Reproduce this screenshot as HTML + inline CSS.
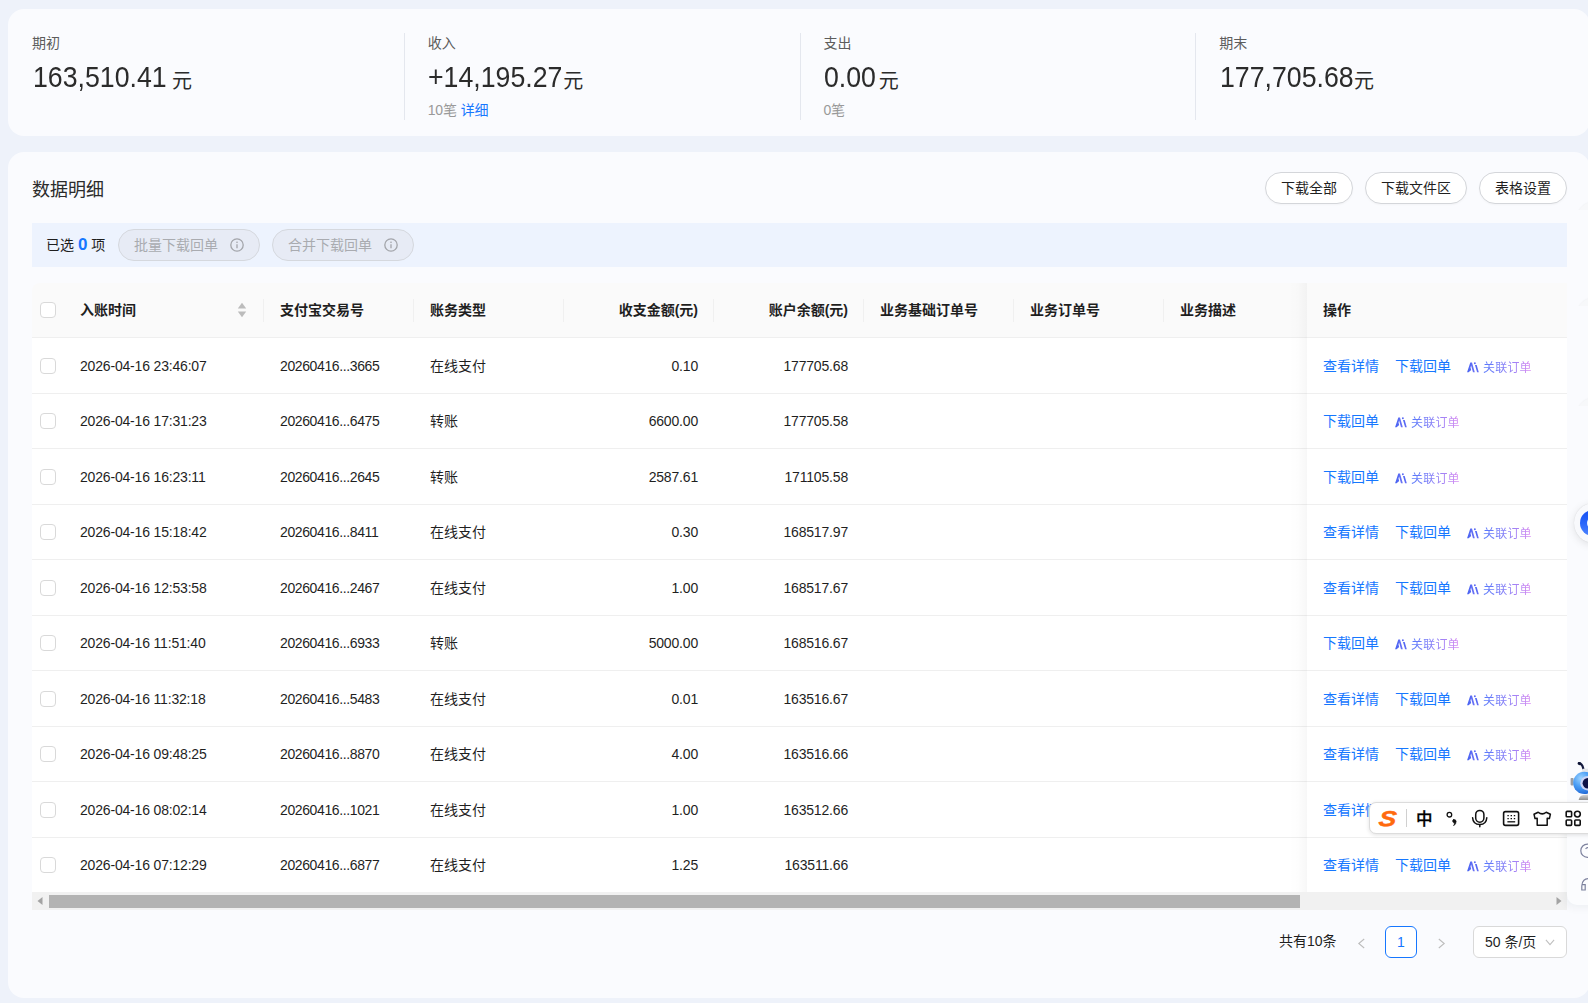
<!DOCTYPE html>
<html lang="zh-CN">
<head>
<meta charset="utf-8">
<title>数据明细</title>
<style>
*{box-sizing:border-box;margin:0;padding:0}
html,body{width:1588px;height:1003px;overflow:hidden}
body{position:relative;background:#eef2fa;font-family:"Liberation Sans","Noto Sans CJK SC",sans-serif;font-size:14px;color:#1f1f1f;-webkit-font-smoothing:antialiased}
.abs{position:absolute}
.card{position:absolute;background:#fafbfe;border-radius:16px}
.stat{position:absolute;top:33px;height:86px}
.stat .lb{position:absolute;left:0;top:1px;font-size:14px;line-height:18px;color:#5c5c5c;white-space:nowrap}
.stat .num{position:absolute;left:0;top:24px;line-height:40px;font-size:30px;color:#2b2b2b;white-space:nowrap;transform:scaleX(0.89);transform-origin:left center}
.stat .yuan{position:absolute;top:24.5px;line-height:40px;font-size:20px;color:#2b2b2b;padding-top:7px;line-height:33px}
.stat .sub{position:absolute;left:0;top:67.5px;font-size:14px;letter-spacing:-0.2px;line-height:18px;color:#999;white-space:nowrap}
.stat .sub a{color:#1677ff;margin-left:4px}
.vline{position:absolute;top:33px;width:1px;height:87px;background:#e4e7ee}
.title{position:absolute;left:32px;top:176.5px;font-size:18px;line-height:26px;color:#2b2b2b}
.pill{position:absolute;top:172px;height:32px;border:1px solid #d4d6da;border-radius:16px;background:#fff;font-size:14px;line-height:30px;text-align:center;color:#1f1f1f;box-shadow:0 1px 2px rgba(0,0,0,.03)}
.selbar{position:absolute;left:32px;top:223px;width:1535px;height:44px;background:#edf3fe}
.selbar .t{position:absolute;left:14px;top:11px;line-height:22px;font-size:14px;color:#1f1f1f;white-space:nowrap}
.selbar .t b{color:#1677ff;font-weight:700;font-size:17px;line-height:20px}
.dis{position:absolute;top:6px;height:32px;width:142px;border:1px solid #d5d8de;border-radius:16px;background:#e7ebf5;color:#a9abb0;font-size:14px;line-height:30px;padding-left:15px;white-space:nowrap}
.dis svg{position:absolute;right:15px;top:8px}
.thead{position:absolute;left:32px;top:283px;width:1535px;height:55px;background:#fafafa;border-bottom:1px solid #efefef;border-radius:8px 0 0 0}
.th{position:absolute;top:0;height:54px;line-height:54px;font-weight:700;font-size:14px;color:#1f1f1f;white-space:nowrap}
.sep{position:absolute;top:16px;width:1px;height:23px;background:#f0f0f0}
.row{position:absolute;left:32px;width:1535px;background:#fff;border-bottom:1px solid #efefef}
.td{position:absolute;top:0;white-space:nowrap;font-size:14px;color:#1f1f1f;letter-spacing:-0.18px}
.td.r{text-align:right}
.cb{position:absolute;left:8px;width:16px;height:16px;border:1px solid #d9d9d9;border-radius:4px;background:#fff}
.ops{position:absolute;left:1291px;top:0;white-space:nowrap;font-size:14px;letter-spacing:0}
.ops a{color:#1677ff;margin-right:16px;text-decoration:none}
.ops .rel{font-size:12px;letter-spacing:0.2px;position:relative;top:1px;background:linear-gradient(90deg,#5678fb 0%,#8a7ef6 50%,#dc8cf2 100%);-webkit-background-clip:text;background-clip:text;color:transparent;-webkit-text-fill-color:transparent}
.ops svg.ai{vertical-align:-2px;margin-right:4px}
.fixshadow{position:absolute;left:1289px;top:283px;width:18px;height:609px;background:linear-gradient(90deg,rgba(0,0,0,0) 0%,rgba(0,0,0,0.008) 50%,rgba(0,0,0,0.03) 100%)}
.sbar{position:absolute;left:32px;top:892px;width:1535px;height:18px;background:#f1f1f1}
.sbar .thumb{position:absolute;left:17px;top:3px;width:1251px;height:13px;background:#b3b3b3}
.pg{position:absolute;font-size:14px;color:#1f1f1f;white-space:nowrap}
</style>
</head>
<body>

<div class="card" style="left:8px;top:9px;width:1582px;height:127px"></div>
<div class="card" style="left:8px;top:152px;width:1582px;height:846px"></div>
<div class="stat" style="left:32px"><div class="lb">期初</div><div class="num" style="left:1px;letter-spacing:0px">163,510.41</div><div class="yuan" style="left:139.9px">元</div></div>
<div class="stat" style="left:427.75px"><div class="lb">收入</div><div class="num" style="left:0px;letter-spacing:0px">+14,195.27</div><div class="yuan" style="left:135.45px">元</div><div class="sub">10笔<a>详细</a></div></div>
<div class="stat" style="left:823.5px"><div class="lb">支出</div><div class="num" style="left:0px;letter-spacing:0px">0.00</div><div class="yuan" style="left:55.2px">元</div><div class="sub">0笔</div></div>
<div class="stat" style="left:1219.25px"><div class="lb">期末</div><div class="num" style="left:1px;letter-spacing:0px">177,705.68</div><div class="yuan" style="left:134.85px">元</div></div>
<div class="vline" style="left:404px"></div>
<div class="vline" style="left:800px"></div>
<div class="vline" style="left:1195.4px"></div>
<div class="title">数据明细</div>
<div class="pill" style="left:1265px;width:88px">下载全部</div>
<div class="pill" style="left:1365px;width:102px">下载文件区</div>
<div class="pill" style="left:1479px;width:88px">表格设置</div>
<div class="selbar"><div class="t">已选 <b>0</b> 项</div><div class="dis" style="left:86px">批量下载回单<svg width="14" height="14" viewBox="0 0 14 14" fill="none" stroke="#a3a5aa" stroke-width="1.3"><circle cx="7" cy="7" r="6.2"/><path d="M7 6.2V10.2" stroke-width="1.3"/><circle cx="7" cy="4.2" r="0.5" fill="#a9abb0" stroke-width="0.6"/></svg></div><div class="dis" style="left:240px">合并下载回单<svg width="14" height="14" viewBox="0 0 14 14" fill="none" stroke="#a3a5aa" stroke-width="1.3"><circle cx="7" cy="7" r="6.2"/><path d="M7 6.2V10.2" stroke-width="1.3"/><circle cx="7" cy="4.2" r="0.5" fill="#a9abb0" stroke-width="0.6"/></svg></div></div>
<div class="thead"><div class="cb" style="top:19px"></div><div class="th" style="left:48px">入账时间</div><div class="th" style="left:248px">支付宝交易号</div><div class="th" style="left:398px">账务类型</div><div class="th" style="right:869px">收支金额(元)</div><div class="th" style="right:719px">账户余额(元)</div><div class="th" style="left:848px">业务基础订单号</div><div class="th" style="left:998px">业务订单号</div><div class="th" style="left:1148px">业务描述</div><div class="th" style="left:1291px">操作</div><div class="sep" style="left:231px"></div><div class="sep" style="left:381px"></div><div class="sep" style="left:531px"></div><div class="sep" style="left:681px"></div><div class="sep" style="left:831px"></div><div class="sep" style="left:981px"></div><div class="sep" style="left:1131px"></div><svg class="abs" style="left:204.5px;top:19px" width="10" height="16" viewBox="0 0 10 16"><path d="M5 0.8L9.2 6.4H0.8Z" fill="#bcbcbc"/><path d="M5 15.2L9.2 9.6H0.8Z" fill="#bcbcbc"/></svg></div>
<div class="row" style="top:338px;height:56px;line-height:56px"><div class="cb" style="top:20px"></div><div class="td" style="left:48px">2026-04-16 23:46:07</div><div class="td" style="left:248px;letter-spacing:-0.38px">20260416...3665</div><div class="td" style="left:398px;letter-spacing:0">在线支付</div><div class="td r" style="right:869px">0.10</div><div class="td r" style="right:719px">177705.68</div><div class="ops"><a>查看详情</a><a>下载回单</a><svg class="ai" width="12" height="11" viewBox="0 0 12 11"><defs><linearGradient id="g1" x1="0" x2="1" y1="0" y2="0"><stop offset="0" stop-color="#4461f2"/><stop offset="1" stop-color="#6f74f5"/></linearGradient></defs><g fill="url(#g1)"><path d="M0.1 10.3 L3.3 0.5 L5 0.5 L7.8 10.3 L6.0 10.3 L4.1 3.6 L3.5 5.6 L4.2 8.0 L1.6 10.3 Z"/><path d="M8 3 L9.7 3 L11.8 10.3 L10.1 10.3 Z"/><circle cx="7.9" cy="1.2" r="0.95"/></g></svg><span class="rel">关联订单</span></div></div>
<div class="row" style="top:394px;height:55px;line-height:54px"><div class="cb" style="top:19px"></div><div class="td" style="left:48px">2026-04-16 17:31:23</div><div class="td" style="left:248px;letter-spacing:-0.38px">20260416...6475</div><div class="td" style="left:398px;letter-spacing:0">转账</div><div class="td r" style="right:869px">6600.00</div><div class="td r" style="right:719px">177705.58</div><div class="ops"><a>下载回单</a><svg class="ai" width="12" height="11" viewBox="0 0 12 11"><defs><linearGradient id="g2" x1="0" x2="1" y1="0" y2="0"><stop offset="0" stop-color="#4461f2"/><stop offset="1" stop-color="#6f74f5"/></linearGradient></defs><g fill="url(#g2)"><path d="M0.1 10.3 L3.3 0.5 L5 0.5 L7.8 10.3 L6.0 10.3 L4.1 3.6 L3.5 5.6 L4.2 8.0 L1.6 10.3 Z"/><path d="M8 3 L9.7 3 L11.8 10.3 L10.1 10.3 Z"/><circle cx="7.9" cy="1.2" r="0.95"/></g></svg><span class="rel">关联订单</span></div></div>
<div class="row" style="top:449px;height:56px;line-height:56px"><div class="cb" style="top:20px"></div><div class="td" style="left:48px">2026-04-16 16:23:11</div><div class="td" style="left:248px;letter-spacing:-0.38px">20260416...2645</div><div class="td" style="left:398px;letter-spacing:0">转账</div><div class="td r" style="right:869px">2587.61</div><div class="td r" style="right:719px">171105.58</div><div class="ops"><a>下载回单</a><svg class="ai" width="12" height="11" viewBox="0 0 12 11"><defs><linearGradient id="g3" x1="0" x2="1" y1="0" y2="0"><stop offset="0" stop-color="#4461f2"/><stop offset="1" stop-color="#6f74f5"/></linearGradient></defs><g fill="url(#g3)"><path d="M0.1 10.3 L3.3 0.5 L5 0.5 L7.8 10.3 L6.0 10.3 L4.1 3.6 L3.5 5.6 L4.2 8.0 L1.6 10.3 Z"/><path d="M8 3 L9.7 3 L11.8 10.3 L10.1 10.3 Z"/><circle cx="7.9" cy="1.2" r="0.95"/></g></svg><span class="rel">关联订单</span></div></div>
<div class="row" style="top:505px;height:55px;line-height:54px"><div class="cb" style="top:19px"></div><div class="td" style="left:48px">2026-04-16 15:18:42</div><div class="td" style="left:248px;letter-spacing:-0.38px">20260416...8411</div><div class="td" style="left:398px;letter-spacing:0">在线支付</div><div class="td r" style="right:869px">0.30</div><div class="td r" style="right:719px">168517.97</div><div class="ops"><a>查看详情</a><a>下载回单</a><svg class="ai" width="12" height="11" viewBox="0 0 12 11"><defs><linearGradient id="g4" x1="0" x2="1" y1="0" y2="0"><stop offset="0" stop-color="#4461f2"/><stop offset="1" stop-color="#6f74f5"/></linearGradient></defs><g fill="url(#g4)"><path d="M0.1 10.3 L3.3 0.5 L5 0.5 L7.8 10.3 L6.0 10.3 L4.1 3.6 L3.5 5.6 L4.2 8.0 L1.6 10.3 Z"/><path d="M8 3 L9.7 3 L11.8 10.3 L10.1 10.3 Z"/><circle cx="7.9" cy="1.2" r="0.95"/></g></svg><span class="rel">关联订单</span></div></div>
<div class="row" style="top:560px;height:56px;line-height:56px"><div class="cb" style="top:20px"></div><div class="td" style="left:48px">2026-04-16 12:53:58</div><div class="td" style="left:248px;letter-spacing:-0.38px">20260416...2467</div><div class="td" style="left:398px;letter-spacing:0">在线支付</div><div class="td r" style="right:869px">1.00</div><div class="td r" style="right:719px">168517.67</div><div class="ops"><a>查看详情</a><a>下载回单</a><svg class="ai" width="12" height="11" viewBox="0 0 12 11"><defs><linearGradient id="g5" x1="0" x2="1" y1="0" y2="0"><stop offset="0" stop-color="#4461f2"/><stop offset="1" stop-color="#6f74f5"/></linearGradient></defs><g fill="url(#g5)"><path d="M0.1 10.3 L3.3 0.5 L5 0.5 L7.8 10.3 L6.0 10.3 L4.1 3.6 L3.5 5.6 L4.2 8.0 L1.6 10.3 Z"/><path d="M8 3 L9.7 3 L11.8 10.3 L10.1 10.3 Z"/><circle cx="7.9" cy="1.2" r="0.95"/></g></svg><span class="rel">关联订单</span></div></div>
<div class="row" style="top:616px;height:55px;line-height:54px"><div class="cb" style="top:19px"></div><div class="td" style="left:48px">2026-04-16 11:51:40</div><div class="td" style="left:248px;letter-spacing:-0.38px">20260416...6933</div><div class="td" style="left:398px;letter-spacing:0">转账</div><div class="td r" style="right:869px">5000.00</div><div class="td r" style="right:719px">168516.67</div><div class="ops"><a>下载回单</a><svg class="ai" width="12" height="11" viewBox="0 0 12 11"><defs><linearGradient id="g6" x1="0" x2="1" y1="0" y2="0"><stop offset="0" stop-color="#4461f2"/><stop offset="1" stop-color="#6f74f5"/></linearGradient></defs><g fill="url(#g6)"><path d="M0.1 10.3 L3.3 0.5 L5 0.5 L7.8 10.3 L6.0 10.3 L4.1 3.6 L3.5 5.6 L4.2 8.0 L1.6 10.3 Z"/><path d="M8 3 L9.7 3 L11.8 10.3 L10.1 10.3 Z"/><circle cx="7.9" cy="1.2" r="0.95"/></g></svg><span class="rel">关联订单</span></div></div>
<div class="row" style="top:671px;height:56px;line-height:56px"><div class="cb" style="top:20px"></div><div class="td" style="left:48px">2026-04-16 11:32:18</div><div class="td" style="left:248px;letter-spacing:-0.38px">20260416...5483</div><div class="td" style="left:398px;letter-spacing:0">在线支付</div><div class="td r" style="right:869px">0.01</div><div class="td r" style="right:719px">163516.67</div><div class="ops"><a>查看详情</a><a>下载回单</a><svg class="ai" width="12" height="11" viewBox="0 0 12 11"><defs><linearGradient id="g7" x1="0" x2="1" y1="0" y2="0"><stop offset="0" stop-color="#4461f2"/><stop offset="1" stop-color="#6f74f5"/></linearGradient></defs><g fill="url(#g7)"><path d="M0.1 10.3 L3.3 0.5 L5 0.5 L7.8 10.3 L6.0 10.3 L4.1 3.6 L3.5 5.6 L4.2 8.0 L1.6 10.3 Z"/><path d="M8 3 L9.7 3 L11.8 10.3 L10.1 10.3 Z"/><circle cx="7.9" cy="1.2" r="0.95"/></g></svg><span class="rel">关联订单</span></div></div>
<div class="row" style="top:727px;height:55px;line-height:54px"><div class="cb" style="top:19px"></div><div class="td" style="left:48px">2026-04-16 09:48:25</div><div class="td" style="left:248px;letter-spacing:-0.38px">20260416...8870</div><div class="td" style="left:398px;letter-spacing:0">在线支付</div><div class="td r" style="right:869px">4.00</div><div class="td r" style="right:719px">163516.66</div><div class="ops"><a>查看详情</a><a>下载回单</a><svg class="ai" width="12" height="11" viewBox="0 0 12 11"><defs><linearGradient id="g8" x1="0" x2="1" y1="0" y2="0"><stop offset="0" stop-color="#4461f2"/><stop offset="1" stop-color="#6f74f5"/></linearGradient></defs><g fill="url(#g8)"><path d="M0.1 10.3 L3.3 0.5 L5 0.5 L7.8 10.3 L6.0 10.3 L4.1 3.6 L3.5 5.6 L4.2 8.0 L1.6 10.3 Z"/><path d="M8 3 L9.7 3 L11.8 10.3 L10.1 10.3 Z"/><circle cx="7.9" cy="1.2" r="0.95"/></g></svg><span class="rel">关联订单</span></div></div>
<div class="row" style="top:782px;height:56px;line-height:56px"><div class="cb" style="top:20px"></div><div class="td" style="left:48px">2026-04-16 08:02:14</div><div class="td" style="left:248px;letter-spacing:-0.38px">20260416...1021</div><div class="td" style="left:398px;letter-spacing:0">在线支付</div><div class="td r" style="right:869px">1.00</div><div class="td r" style="right:719px">163512.66</div><div class="ops"><a>查看详情</a><a>下载回单</a><svg class="ai" width="12" height="11" viewBox="0 0 12 11"><defs><linearGradient id="g9" x1="0" x2="1" y1="0" y2="0"><stop offset="0" stop-color="#4461f2"/><stop offset="1" stop-color="#6f74f5"/></linearGradient></defs><g fill="url(#g9)"><path d="M0.1 10.3 L3.3 0.5 L5 0.5 L7.8 10.3 L6.0 10.3 L4.1 3.6 L3.5 5.6 L4.2 8.0 L1.6 10.3 Z"/><path d="M8 3 L9.7 3 L11.8 10.3 L10.1 10.3 Z"/><circle cx="7.9" cy="1.2" r="0.95"/></g></svg><span class="rel">关联订单</span></div></div>
<div class="row" style="top:838px;height:54px;line-height:54px;border-bottom:none"><div class="cb" style="top:19px"></div><div class="td" style="left:48px">2026-04-16 07:12:29</div><div class="td" style="left:248px;letter-spacing:-0.38px">20260416...6877</div><div class="td" style="left:398px;letter-spacing:0">在线支付</div><div class="td r" style="right:869px">1.25</div><div class="td r" style="right:719px">163511.66</div><div class="ops"><a>查看详情</a><a>下载回单</a><svg class="ai" width="12" height="11" viewBox="0 0 12 11"><defs><linearGradient id="g10" x1="0" x2="1" y1="0" y2="0"><stop offset="0" stop-color="#4461f2"/><stop offset="1" stop-color="#6f74f5"/></linearGradient></defs><g fill="url(#g10)"><path d="M0.1 10.3 L3.3 0.5 L5 0.5 L7.8 10.3 L6.0 10.3 L4.1 3.6 L3.5 5.6 L4.2 8.0 L1.6 10.3 Z"/><path d="M8 3 L9.7 3 L11.8 10.3 L10.1 10.3 Z"/><circle cx="7.9" cy="1.2" r="0.95"/></g></svg><span class="rel">关联订单</span></div></div>
<div class="fixshadow"></div>
<div class="sbar"><div class="thumb"></div><svg class="abs" style="left:4px;top:4px" width="8" height="10" viewBox="0 0 8 10"><path d="M6.5 1V9L1.5 5Z" fill="#a3a3a3"/></svg><svg class="abs" style="right:4px;top:4px" width="8" height="10" viewBox="0 0 8 10"><path d="M1.5 1V9L6.5 5Z" fill="#a3a3a3"/></svg></div>
<div class="pg" style="left:1279px;top:931px;line-height:20px">共有10条</div>
<svg class="abs" style="left:1356.5px;top:938px" width="9" height="11" viewBox="0 0 10 12" fill="none" stroke="#bdbdbd" stroke-width="1.2"><path d="M8 1L2 6L8 11"/></svg>
<div class="abs" style="left:1385px;top:926px;width:32px;height:32px;border:1px solid #1677ff;border-radius:6px;background:#fff;color:#1677ff;text-align:center;line-height:30px;font-size:14px">1</div>
<svg class="abs" style="left:1436.5px;top:938px" width="9" height="11" viewBox="0 0 10 12" fill="none" stroke="#bdbdbd" stroke-width="1.2"><path d="M2 1L8 6L2 11"/></svg>
<div class="abs" style="left:1473px;top:926px;width:94px;height:32px;border:1px solid #d9d9d9;border-radius:6px;background:#fff;color:#1f1f1f;line-height:30px;font-size:14px;padding-left:11px;white-space:nowrap">50 条/页<svg class="abs" style="right:11px;top:11.5px" width="10" height="7" viewBox="0 0 11 8" fill="none" stroke="#bfbfbf" stroke-width="1.2"><path d="M0.8 1L5.5 6.5L10.2 1"/></svg></div>

<!-- faint clipped circles at right edge -->
<div class="abs" style="left:1570px;top:195px;width:18px;height:15px;overflow:hidden"><div class="abs" style="left:6px;top:6px;width:40px;height:40px;border-radius:50%;background:#f7f8fa;box-shadow:0 0 2px rgba(0,0,0,.06)"></div></div>
<div class="abs" style="left:1570px;top:291px;width:18px;height:15px;overflow:hidden"><div class="abs" style="left:6px;top:6px;width:40px;height:40px;border-radius:50%;background:#f7f8fa;box-shadow:0 0 2px rgba(0,0,0,.06)"></div></div>
<div class="abs" style="left:1570px;top:391px;width:18px;height:15px;overflow:hidden"><div class="abs" style="left:6px;top:6px;width:40px;height:40px;border-radius:50%;background:#f7f8fa;box-shadow:0 0 2px rgba(0,0,0,.06)"></div></div>
<!-- floating blue button -->
<div class="abs" style="left:1573.5px;top:503px;width:40px;height:40px;border-radius:50%;background:#f8f9fc;box-shadow:0 2px 8px rgba(0,0,0,.10),0 0 1px rgba(0,0,0,.15)"></div>
<div class="abs" style="left:1580px;top:510px;width:26px;height:26px;border-radius:50%;background:linear-gradient(180deg,#1550f3 0%,#2a66fa 50%,#4d84ff 100%)"></div>
<div class="abs" style="left:1586.5px;top:517px;width:10px;height:12px;border-radius:50%;background:#eef3ff"></div>
<!-- side panel -->
<div class="abs" style="left:1567px;top:812px;width:40px;height:93px;background:#fbfcfe;border-radius:0 0 0 10px;box-shadow:-3px 3px 9px rgba(20,30,60,.05)"></div>
<svg class="abs" style="left:1578px;top:842px" width="12" height="50" viewBox="0 0 12 50" fill="none" stroke="#7d829e" stroke-width="1.2"><circle cx="9.4" cy="8.7" r="6.6"/><path d="M7.6 7 Q9.4 4.6 11.6 6.4"/><path d="M12 36.6 Q4 36.2 3.8 44 V48 H7.2 V42.6 H3.8"/></svg>
<!-- robot -->
<svg class="abs" style="left:1566px;top:758px" width="22" height="46" viewBox="0 0 22 46">
<defs><radialGradient id="rb" cx="0.35" cy="0.3" r="0.8"><stop offset="0" stop-color="#9fd4ff"/><stop offset="0.45" stop-color="#4a9ef5"/><stop offset="1" stop-color="#1b5fd0"/></radialGradient>
<linearGradient id="rg" x1="0" x2="0" y1="0" y2="1"><stop offset="0" stop-color="#d8d8d8"/><stop offset="1" stop-color="#8e8e8e"/></linearGradient></defs>
<path d="M13 5.2 Q16 5.4 17.3 10.6" stroke="#141a3e" stroke-width="2.2" fill="none" stroke-linecap="round"/>
<ellipse cx="13.4" cy="5.6" rx="1.8" ry="1.5" fill="#0e1436" transform="rotate(35 13.4 5.6)"/>
<path d="M15 14.6 L17 10.8 H22 V15 Z" fill="#e4e6ea"/>
<rect x="4.6" y="20" width="3" height="7.4" rx="0.8" fill="#9a9da3"/>
<circle cx="18.4" cy="24.9" r="11.2" fill="url(#rb)"/>
<circle cx="21.6" cy="25.2" r="7.3" fill="#c9d3f7"/>
<circle cx="21.9" cy="25.2" r="5.3" fill="#0d1146"/>
<path d="M12.6 42 Q13.5 37.6 17.4 37 L22 36.6 V42 Z" fill="url(#rg)"/>
</svg>
<!-- IME toolbar -->
<div class="abs" style="left:1369px;top:802px;width:240px;height:32px;background:#fff;border:1px solid #dcdcdc;border-radius:7px;box-shadow:0 1px 4px rgba(0,0,0,.12)"></div>
<div class="abs" style="left:1378.5px;top:805px;width:22px;height:28px;line-height:28px;font-family:'Liberation Sans',sans-serif;font-weight:700;font-style:italic;font-size:23px;color:#ff6a0e;-webkit-text-stroke:0.45px #ff6a0e;transform:scale(1.15,0.93) skewX(-6deg);transform-origin:left center;letter-spacing:0">S</div>
<div class="abs" style="left:1406px;top:809px;width:1px;height:18px;background:#d0d0d0"></div>
<div class="abs" style="left:1416px;top:806px;width:18px;height:24px;line-height:24px;font-family:'Noto Sans CJK SC','Liberation Sans',sans-serif;font-weight:500;-webkit-text-stroke:0.3px #000;font-size:16.5px;color:#000">中</div>
<svg class="abs" style="left:1444px;top:808px" width="150" height="22" viewBox="0 0 150 22" fill="none" stroke="#111" stroke-width="1.5" stroke-linejoin="round" stroke-linecap="round">
<circle cx="5.4" cy="6.7" r="2.3" stroke-width="1.3"/>
<path d="M9.4 11.6 q2.6 -0.6 2.8 1.8 q0 2.6 -2.6 4.4 q1.2 -1.8 0.6 -3 q-1.4 -0.2 -1.6 -1.6 q0 -1.2 0.8 -1.6z" fill="#111" stroke-width="0.6"/>
<rect x="31.7" y="2.4" width="8.2" height="11.8" rx="4.1"/>
<path d="M28.6 9.8 Q29 16.4 35.8 16.6 Q42.4 16.4 42.8 9.8"/>
<path d="M35.8 16.8 V18.8"/>
<rect x="59.6" y="3.6" width="15" height="13.8" rx="1.8" stroke-width="1.6"/>
<path d="M63.4 7.6h1.4M66.6 7.6h1.4M69.8 7.6h1.4M63.4 10.6h1.4M66.6 10.6h1.4M69.8 10.6h1.4" stroke-width="1.3" stroke-linecap="butt"/>
<path d="M63.4 13.8h7.8" stroke-width="1.3" stroke-linecap="butt"/>
<path d="M94.2 4.2 L90 6.2 L91 10.6 L93.2 10.2 V17.2 H103.2 V10.2 L105.4 10.6 L106.4 6.2 L102.2 4.2 Q98.2 7.6 94.2 4.2 Z" stroke-width="1.5"/>
<rect x="122.2" y="3.4" width="5.4" height="5.4" rx="0.8" stroke-width="1.6"/>
<circle cx="133.4" cy="6.1" r="2.9" stroke-width="1.6"/>
<rect x="122.2" y="12" width="5.4" height="5.4" rx="0.8" stroke-width="1.6"/>
<rect x="130.8" y="12" width="5.4" height="5.4" rx="0.8" stroke-width="1.6"/>
</svg>

</body></html>
